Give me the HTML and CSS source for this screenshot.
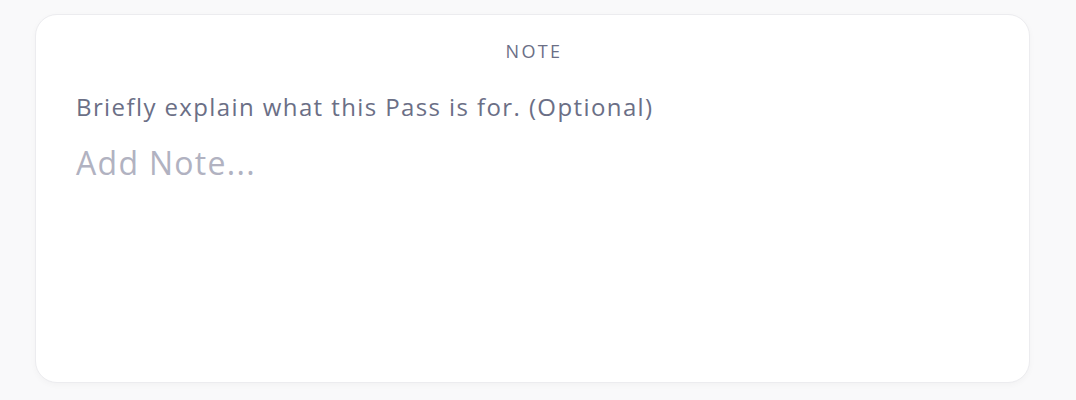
FILE: index.html
```html
<!DOCTYPE html>
<html>
<head>
<meta charset="utf-8">
<link rel="stylesheet" href="styles.css">
</head>
<body>
<div class="page">
  <section class="card">
    <h2 class="title">NOTE</h2>
    <p class="label">Briefly explain what this Pass is for. (Optional)</p>
    <div class="input">Add Note...</div>
  </section>
</div>
</body>
</html>
```
FILE: styles.css
```css
html, body {
  margin: 0;
  padding: 0;
  background: #f9f9fa;
}
body {
  font-family: "Open Sans", Lato, sans-serif;
  width: 1076px;
  height: 400px;
  overflow: hidden;
}
.page {
  padding: 14px 46px 0 35px;
}
.card {
  box-sizing: border-box;
  height: 369px;
  background: #ffffff;
  border: 1px solid #ececef;
  border-radius: 22px;
  box-shadow: 0 2px 6px rgba(0,0,0,0.03);
  padding: 24px 40px 0 40px;
}
.title {
  margin: 0;
  padding-left: 3px;
  text-align: center;
  font-size: 18px;
  font-weight: 400;
  color: #6b6f86;
  line-height: 24px;
  letter-spacing: 2.4px;
}
.label {
  margin: 28px 0 0 0;
  font-size: 24px;
  line-height: 32px;
  letter-spacing: 1.4px;
  color: #6b6f86;
}
.input {
  margin-top: 20px;
  font-size: 32px;
  line-height: 40px;
  letter-spacing: 1.3px;
  color: #b1b2c1;
}
```
